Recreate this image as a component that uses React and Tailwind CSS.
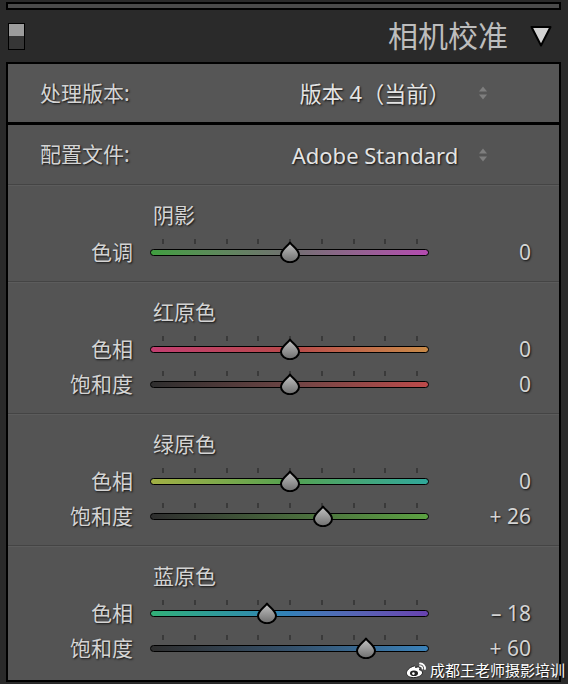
import React from "react";

const shadow = "[text-shadow:1px_1px_2px_#111]";

const ticks = [0, 1, 2, 3, 4, 5, 6, 7, 8];

function Thumb() {
  return (
    <svg width="22" height="22" viewBox="0 0 22 22">
      <defs>
        <linearGradient id="thumbFill" x1="0" y1="0" x2="0" y2="1">
          <stop offset="0" stopColor="#c4c4c4" />
          <stop offset="1" stopColor="#6e6e6e" />
        </linearGradient>
      </defs>
      <path
        d="M11 1.5 C13 5 20 8.5 20 14 A9 7.2 0 0 1 2 14 C2 8.5 9 5 11 1.5 Z"
        fill="url(#thumbFill)"
        stroke="#000"
        strokeWidth="2"
        strokeLinejoin="round"
      />
    </svg>
  );
}

function Slider({ value, track }) {
  const left = 140 + value * 1.27 - 11;
  return (
    <div className="relative ml-[17px] h-[35px] w-[279px]">
      {ticks.map((i) => (
        <div
          key={i}
          className="absolute top-[4px] h-[5px] w-[2px] bg-[#3a3a3a]"
          style={{ left: 12 + i * 31.75 }}
        />
      ))}
      <div className={`absolute left-0 top-[14px] h-[7px] w-[279px] rounded-full border border-black ${track}`} />
      <div className="absolute top-[6px]" style={{ left }}>
        <Thumb />
      </div>
    </div>
  );
}

function Row({ label, value, display, track }) {
  return (
    <div className="flex h-[35px] items-center">
      <div className={`w-[125px] text-right text-[21px] leading-none text-[#d4d4d4] ${shadow}`}>{label}</div>
      <Slider value={value} track={track} />
      <div className={`w-[102px] text-right text-[21px] leading-none text-[#d4d4d4] ${shadow}`}>{display}</div>
    </div>
  );
}

function Group({ title, rows, height }) {
  return (
    <div className={`flex flex-col pt-[14px] ${height}`}>
      <div className={`h-[30px] pl-[145px] text-[21px] leading-[30px] text-[#d4d4d4] ${shadow}`}>{title}</div>
      <div className="mt-[5px] flex flex-col">
        {rows.map((r) => (
          <Row key={r.label} {...r} />
        ))}
      </div>
    </div>
  );
}

function Divider() {
  return <div className="h-[2px] border-t border-[#444444] bg-[#5c5c5c]" />;
}

function Spinner() {
  return (
    <svg width="10" height="16" viewBox="0 0 10 16" className="ml-[-2px]">
      <path d="M5 1.5 L9 6.5 H1 Z" fill="#7e7e7e" />
      <path d="M5 14.5 L9 9.5 H1 Z" fill="#7e7e7e" />
    </svg>
  );
}

function Popup({ label, value, bg }) {
  return (
    <div className={`flex items-center ${bg}`}>
      <div className={`w-[262px] pl-[32px] text-[21px] leading-none text-[#d4d4d4] ${shadow}`}>{label}</div>
      <div className={`w-[210px] text-center text-[22px] leading-none text-[#e4e4e4] ${shadow}`}>{value}</div>
      <Spinner />
    </div>
  );
}

function Weibo() {
  return (
    <svg width="22" height="18" viewBox="0 0 22 18">
      <path
        d="M9 5 C4 6.5 1 10 1.5 12.5 C2 15.5 6 17 10 16.5 C15 16 18 13.5 17.5 11 C17 9 14.5 9 14.5 9 C15.5 7 14.5 5.5 12.5 6 L10.5 6.5 C11 5 10.5 4.5 9 5 Z"
        fill="#fff"
        stroke="#222"
        strokeWidth="1"
      />
      <ellipse cx="9" cy="12.3" rx="4" ry="2.8" fill="#222" />
      <circle cx="8.4" cy="12.6" r="1.3" fill="#fff" />
      <path d="M15 2.5 A5 5 0 0 1 20 8" stroke="#fff" strokeWidth="1.8" fill="none" strokeLinecap="round" />
      <path d="M14.8 5 A2.6 2.6 0 0 1 17.5 7.8" stroke="#fff" strokeWidth="1.5" fill="none" strokeLinecap="round" />
    </svg>
  );
}

export default function App() {
  return (
    <div className="relative h-[684px] w-[568px] overflow-hidden bg-[#2a2a2a] pt-[2px] font-['Noto_Sans','Noto_Sans_CJK_SC',sans-serif]">
      {/* bottom of previous panel */}
      <div className="ml-[6px] h-[8px] w-[555px] border-2 border-black bg-[#4a4a4a]" />

      {/* header */}
      <div className="flex h-[52px] items-center">
        <div className="ml-[8px] flex h-[27px] w-[17px] flex-col border border-black">
          <div className="h-1/2 bg-[#9c9c9c]" />
          <div className="h-1/2 bg-[#363636]" />
        </div>
        <div className="ml-auto text-[30px] leading-none text-[#bdbdbd]">相机校准</div>
        <svg width="22" height="22" viewBox="0 0 22 22" className="ml-[22px] mr-[16px]">
          <path d="M1.5 2 H20.5 L11 20.5 Z" fill="#d2d2d2" stroke="#000" strokeWidth="2" strokeLinejoin="round" />
        </svg>
      </div>

      {/* calibration panel */}
      <div className="ml-[6px] w-[555px] border-2 border-black bg-[#545454]">
        <Popup label="处理版本:" value="版本 4（当前）" bg="h-[58px] bg-[#565656]" />
        <div className="h-[3px] bg-black" />
        <Popup label="配置文件:" value="Adobe Standard" bg="h-[59px]" />
        <Divider />
        <Group
          title="阴影"
          height="h-[95px]"
          rows={[
            { label: "色调", value: 0, display: "0", track: "bg-linear-to-r from-[#3f9e3f] via-[#707070] to-[#b44ab0]" },
          ]}
        />
        <Divider />
        <Group
          title="红原色"
          height="h-[130px]"
          rows={[
            { label: "色相", value: 0, display: "0", track: "bg-linear-to-r from-[#c23e70] via-[#b8484a] to-[#c88a48]" },
            { label: "饱和度", value: 0, display: "0", track: "bg-linear-to-r from-[#2e2e2e] via-[#6c4444] to-[#bc4a4a]" },
          ]}
        />
        <Divider />
        <Group
          title="绿原色"
          height="h-[130px]"
          rows={[
            { label: "色相", value: 0, display: "0", track: "bg-linear-to-r from-[#a2b044] via-[#54a250] to-[#30a89a]" },
            { label: "饱和度", value: 26, display: "+ 26", track: "bg-linear-to-r from-[#2e2e2e] via-[#48683c] to-[#5ca242]" },
          ]}
        />
        <Divider />
        <Group
          title="蓝原色"
          height="h-[133px]"
          rows={[
            { label: "色相", value: -18, display: "– 18", track: "bg-linear-to-r from-[#32b078] via-[#3480b8] to-[#6842b0]" },
            { label: "饱和度", value: 60, display: "+ 60", track: "bg-linear-to-r from-[#2e2e2e] via-[#34506a] to-[#3a82ba]" },
          ]}
        />
      </div>

      {/* watermark */}
      <div className="absolute bottom-[5px] right-[3px] flex items-center gap-[3px]">
        <Weibo />
        <span className="text-[15px] leading-none text-white [text-shadow:1px_1px_2px_#000]">成都王老师摄影培训</span>
      </div>
    </div>
  );
}
